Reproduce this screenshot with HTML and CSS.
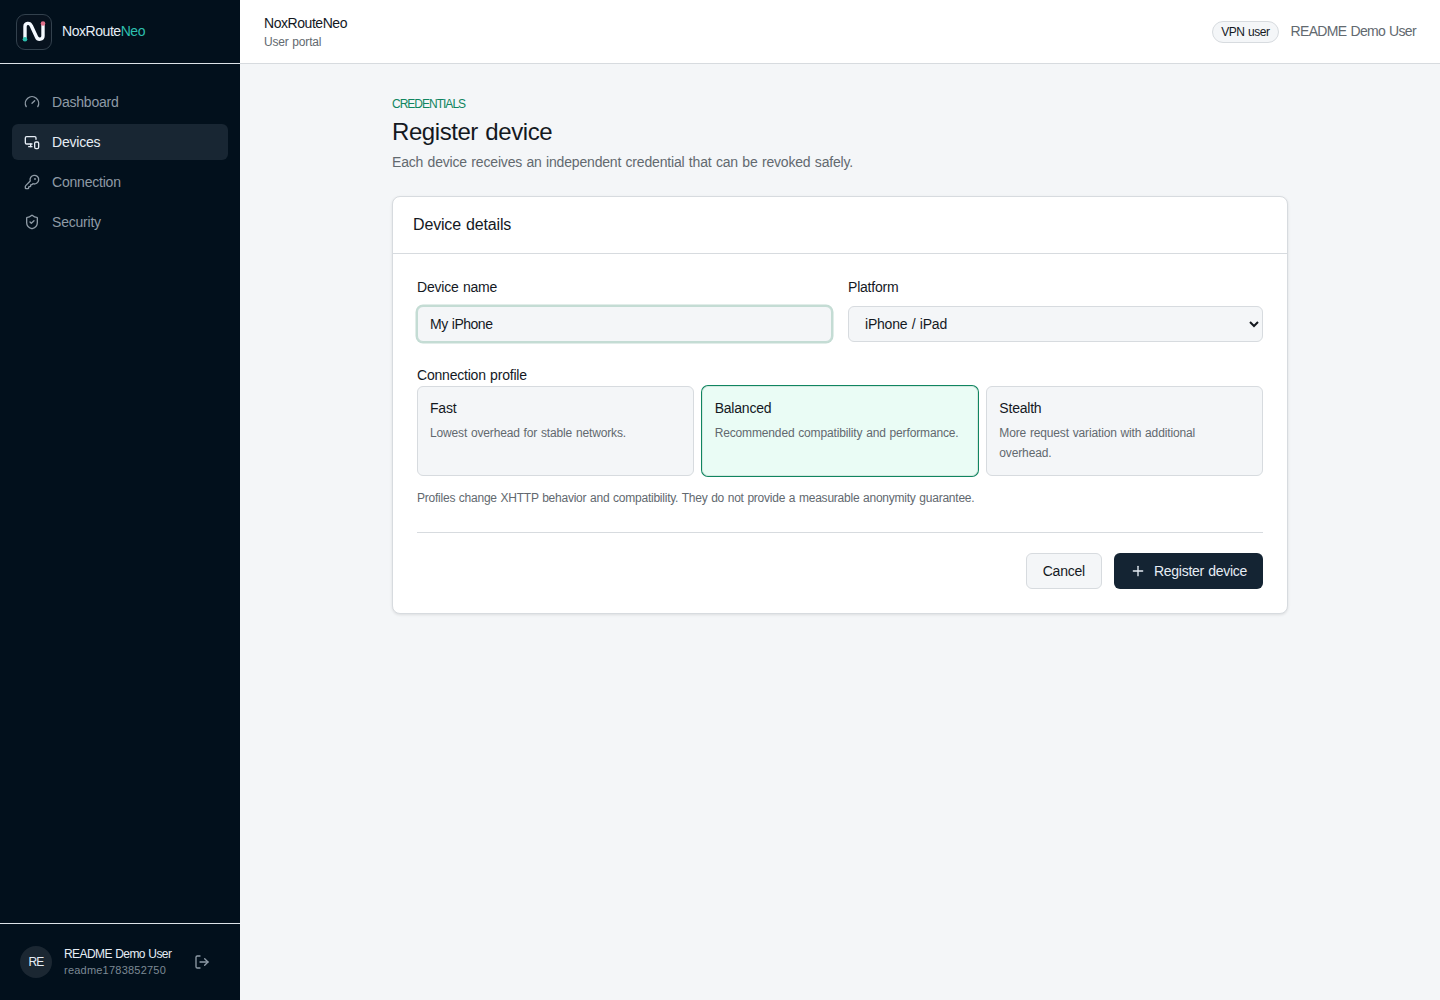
FILE: index.html
```html
<!DOCTYPE html>
<html lang="en">
<head>
  <meta charset="UTF-8" />
  <meta name="viewport" content="width=device-width, initial-scale=1.0"/>
  <title>Register device - NoxRouteNeo</title>
  <link rel="stylesheet" href="styles.css">
</head>
<body>

  <aside class="sidebar">
    <div class="brand">
      <svg class="brand-logo" viewBox="0 0 36 36" fill="none">
        <rect x="0.5" y="0.5" width="35" height="35" rx="8.5" fill="#07121e" stroke="#33414d"/>
        <path d="M9 25V12.500C9 8.600 13.800 8.300 15.300 11.800L20.500 23C22 26.500 27 25.500 27 22V10" stroke="#f4f9ff" stroke-width="3.400" stroke-linecap="round"/>
        <circle cx="9" cy="25.200" r="2.300" fill="#2dbfae"/>
        <circle cx="27" cy="9.500" r="2.300" fill="#e2708b"/>
      </svg>
      <span class="brand-name">NoxRoute<span class="accent">Neo</span></span>
    </div>

    <nav class="menu">
      <a class="menu-item" href="#">
        <svg class="icon" viewBox="0 0 24 24"><path d="m12 14 4-4"/><path d="M3.340 19a10 10 0 1 1 17.320 0"/></svg>
        <span>Dashboard</span>
      </a>
      <a class="menu-item active" href="#">
        <svg class="icon" viewBox="0 0 24 24"><path d="M18 8V6a2 2 0 0 0-2-2H4a2 2 0 0 0-2 2v7a2 2 0 0 0 2 2h8"/><path d="M10 19v-3.960 3.150"/><path d="M7 19h5"/><rect width="6" height="10" x="16" y="12" rx="2"/></svg>
        <span>Devices</span>
      </a>
      <a class="menu-item" href="#">
        <svg class="icon" viewBox="0 0 24 24"><path d="M2.586 17.414A2 2 0 0 0 2 18.828V21a1 1 0 0 0 1 1h3a1 1 0 0 0 1-1v-1a1 1 0 0 1 1-1h1a1 1 0 0 0 1-1v-1a1 1 0 0 1 1-1h.172a2 2 0 0 0 1.414-.586l.814-.814a6.500 6.500 0 1 0-4-4z"/><circle cx="16.500" cy="7.500" r=".5" fill="currentColor"/></svg>
        <span>Connection</span>
      </a>
      <a class="menu-item" href="#">
        <svg class="icon" viewBox="0 0 24 24"><path d="M20 13c0 5-3.500 7.500-7.660 8.950a1 1 0 0 1-.670-.010C7.500 20.500 4 18 4 13V6a1 1 0 0 1 1-1c2 0 4.500-1.200 6.240-2.720a1.170 1.170 0 0 1 1.520 0C14.510 3.810 17 5 19 5a1 1 0 0 1 1 1z"/><path d="m9 12 2 2 4-4"/></svg>
        <span>Security</span>
      </a>
    </nav>

    <div class="account">
      <span class="avatar">RE</span>
      <div class="account-info">
        <div class="account-name">README Demo User</div>
        <div class="account-login">readme1783852750</div>
      </div>
      <a class="logout" href="#" aria-label="Log out">
        <svg class="icon" viewBox="0 0 24 24"><path d="m16 17 5-5-5-5"/><path d="M21 12H9"/><path d="M9 21H5a2 2 0 0 1-2-2V5a2 2 0 0 1 2-2h4"/></svg>
      </a>
    </div>
  </aside>

  <div class="page">
    <header class="topbar">
      <div>
        <div class="topbar-title">NoxRouteNeo</div>
        <div class="topbar-sub">User portal</div>
      </div>
      <div class="topbar-user">
        <span class="badge">VPN user</span>
        <span class="topbar-name">README Demo User</span>
      </div>
    </header>

    <main class="container">
      <p class="eyebrow">CREDENTIALS</p>
      <h1>Register device</h1>
      <p class="lead">Each device receives an independent credential that can be revoked safely.</p>

      <section class="card">
        <h2>Device details</h2>
        <form class="form">
          <div class="fields">
            <div class="field">
              <label for="name">Device name</label>
              <input class="control focused" id="name" type="text" value="My iPhone">
            </div>
            <div class="field">
              <label for="platform">Platform</label>
              <select class="control" id="platform">
                <option>iPhone / iPad</option>
              </select>
            </div>
          </div>

          <div class="profile-label">Connection profile</div>
          <div class="profiles">
            <div class="profile">
              <div class="profile-name">Fast</div>
              <p class="profile-text">Lowest overhead for stable networks.</p>
            </div>
            <div class="profile selected">
              <div class="profile-name">Balanced</div>
              <p class="profile-text">Recommended compatibility and performance.</p>
            </div>
            <div class="profile">
              <div class="profile-name">Stealth</div>
              <p class="profile-text">More request variation with additional overhead.</p>
            </div>
          </div>
          <p class="hint">Profiles change XHTTP behavior and compatibility. They do not provide a measurable anonymity guarantee.</p>

          <div class="actions">
            <a class="btn" href="#"><span>Cancel</span></a>
            <button class="btn btn-primary" type="button">
              <svg class="icon" viewBox="0 0 24 24"><path d="M5 12h14"/><path d="M12 5v14"/></svg>
              <span>Register device</span>
            </button>
          </div>
        </form>
      </section>
    </main>
  </div>

</body>
</html>
```
FILE: styles.css
```css
* {
  box-sizing: border-box;
  letter-spacing: -0.015em;
  word-spacing: 0.05em;
}
body {
  display: flex;
  margin: 0;
  min-height: 100vh;
  font-family: "Liberation Sans", Arial, sans-serif;
  font-size: 14px;
  line-height: 20px;
  color: #14191f;
  background: #f4f6f8;
}
h1, h2, p {
  margin: 0;
  font-weight: 400;
}
a {
  color: inherit;
  text-decoration: none;
}
.icon {
  width: 16px;
  height: 16px;
  flex-shrink: 0;
  fill: none;
  stroke: currentColor;
  stroke-width: 2;
  stroke-linecap: round;
  stroke-linejoin: round;
}

/* sidebar */
.sidebar {
  display: flex;
  flex-direction: column;
  width: 240px;
  flex-shrink: 0;
  background: #02101c;
  color: #e6edf5;
}
.brand {
  display: flex;
  align-items: center;
  gap: 10px;
  height: 64px;
  padding: 0 16px;
  border-bottom: 1px solid #dce3e8;
}
.brand-logo {
  width: 36px;
  height: 36px;
}
.brand-name, .accent, .topbar-title {
  letter-spacing: -0.032em;
}
.brand-name {
  padding-bottom: 1px;
}
.accent {
  color: #2dbfae;
}
.menu {
  display: flex;
  flex-direction: column;
  flex: 1;
  gap: 4px;
  padding: 20px 12px;
}
.menu-item {
  display: flex;
  align-items: center;
  gap: 12px;
  height: 36px;
  padding: 0 12px;
  border-radius: 6px;
  color: #8f9ba6;
}
.menu-item span {
  padding-bottom: 1px;
}
.menu-item.active {
  background: #182633;
  color: #e6edf5;
}
.account {
  display: flex;
  align-items: center;
  height: 77px;
  padding: 0 20px;
  border-top: 1px solid #dce3e8;
}
.avatar {
  display: flex;
  align-items: center;
  justify-content: center;
  width: 32px;
  height: 32px;
  border-radius: 50%;
  background: #1b2732;
  font-size: 12px;
  letter-spacing: -0.06em;
}
.account-info {
  width: 118px;
  margin-left: 12px;
}
.account-name {
  font-size: 12px;
  line-height: 16px;
  letter-spacing: -0.048em;
  white-space: nowrap;
}
.account-login {
  font-size: 11px;
  line-height: 16px;
  letter-spacing: 0.02em;
  color: #7d8994;
}
.logout {
  display: flex;
  margin-left: 12px;
  color: #8f9ba6;
}

/* top bar */
.page {
  flex: 1;
}
.topbar {
  display: flex;
  align-items: center;
  justify-content: space-between;
  height: 64px;
  padding: 0 24px;
  background: #fff;
  border-bottom: 1px solid #d7dbdf;
}
.topbar-title {
  line-height: 19px;
  padding-bottom: 1px;
}
.topbar-sub {
  font-size: 12px;
  line-height: 16px;
  color: #62696f;
}
.topbar-user {
  display: flex;
  align-items: center;
  gap: 12px;
}
.topbar-name {
  padding-bottom: 1px;
  letter-spacing: -0.047em;
  color: #62696f;
}
.badge {
  padding: 2px 8px;
  border: 1px solid #d7dbdf;
  border-radius: 11px;
  background: #f4f6f8;
  font-size: 12px;
  line-height: 16px;
  letter-spacing: -0.037em;
}

/* content */
.container {
  width: 896px;
  margin: 0 auto;
  padding-top: 32px;
}
.eyebrow {
  font-size: 12px;
  line-height: 16px;
  letter-spacing: -0.083em;
  color: #108560;
}
h1 {
  margin-top: 4px;
  font-size: 24px;
  line-height: 32px;
  letter-spacing: -0.018em;
}
.lead {
  margin-top: 4px;
  line-height: 20px;
  letter-spacing: -0.013em;
  color: #62696f;
}
.card {
  margin-top: 24px;
  background: #fff;
  border: 1px solid #d7dbdf;
  border-radius: 8px;
  box-shadow: 0 1px 3px rgba(0,0,0,0.1);
}
h2 {
  padding: 16px 20px;
  border-bottom: 1px solid #d7dbdf;
  font-size: 16px;
  line-height: 24px;
  letter-spacing: -0.01em;
}
.form {
  padding: 23px 24px 24px;
}
.fields {
  display: grid;
  grid-template-columns: 1fr 1fr;
  gap: 16px;
}
.field label {
  display: block;
  margin-bottom: 9px;
}
.control {
  display: block;
  width: 100%;
  height: 36px;
  padding: 0 12px;
  border: 1px solid #d7dbdf;
  border-radius: 6px;
  background: #f4f6f8;
  color: #14191f;
  font: inherit;
}
.focused {
  padding-bottom: 1px;
  border-color: #c4dcd4;
  box-shadow: 0 0 0 1.500px #c4dcd4;
  letter-spacing: -0.035em;
}
.profile-label {
  margin-top: 23px;
  padding-bottom: 1px;
}
.profiles {
  display: grid;
  grid-template-columns: repeat(3, 1fr);
  gap: 8px;
}
.profile {
  min-height: 90px;
  padding: 11px 12px 12px;
  border: 1px solid #d7dbdf;
  border-radius: 6px;
  background: #f4f6f8;
}
.profile.selected {
  border-color: #d3e9e0;
  background: #eafcf5;
  box-shadow: 0 0 0 1px #108560;
}
.profile-name {
  line-height: 20px;
}
.profile-text {
  max-width: 246px;
  margin-top: 5px;
  font-size: 12px;
  line-height: 20px;
  letter-spacing: -0.012em;
  color: #62696f;
}
.hint {
  margin-top: 12px;
  font-size: 12px;
  line-height: 20px;
  letter-spacing: -0.0195em;
  color: #62696f;
}
.actions {
  display: flex;
  justify-content: flex-end;
  gap: 12px;
  margin-top: 24px;
  padding-top: 20px;
  border-top: 1px solid #d7dbdf;
}
.btn {
  display: flex;
  align-items: center;
  gap: 8px;
  height: 36px;
  padding: 0 16px;
  border: 1px solid #d7dbdf;
  border-radius: 6px;
  background: #f4f6f8;
  font: inherit;
}
.btn span {
  padding-bottom: 1px;
}
.btn-primary {
  border: none;
  background: #142433;
  color: #e6edf5;
}
.btn-primary span {
  letter-spacing: -0.02em;
}
```
